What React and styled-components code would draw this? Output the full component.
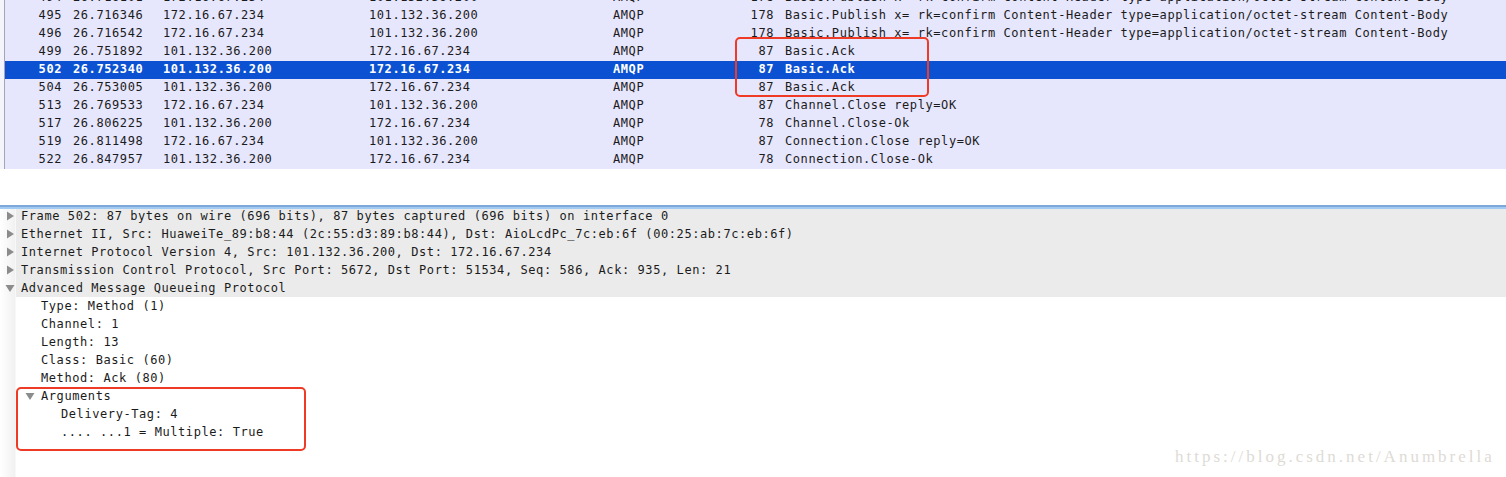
import styled, { createGlobalStyle } from "styled-components";

const GlobalStyle = createGlobalStyle`
  html, body {
    margin: 0;
    padding: 0;
    background: #ffffff;
    overflow: hidden;
  }
`;

const packets = [
  ["494", "26.716101", "172.16.67.234", "101.132.36.200", "AMQP", "178", "Basic.Publish x= rk=confirm Content-Header type=application/octet-stream Content-Body"],
  ["495", "26.716346", "172.16.67.234", "101.132.36.200", "AMQP", "178", "Basic.Publish x= rk=confirm Content-Header type=application/octet-stream Content-Body"],
  ["496", "26.716542", "172.16.67.234", "101.132.36.200", "AMQP", "178", "Basic.Publish x= rk=confirm Content-Header type=application/octet-stream Content-Body"],
  ["499", "26.751892", "101.132.36.200", "172.16.67.234", "AMQP", "87", "Basic.Ack"],
  ["502", "26.752340", "101.132.36.200", "172.16.67.234", "AMQP", "87", "Basic.Ack"],
  ["504", "26.753005", "101.132.36.200", "172.16.67.234", "AMQP", "87", "Basic.Ack"],
  ["513", "26.769533", "172.16.67.234", "101.132.36.200", "AMQP", "87", "Channel.Close reply=OK"],
  ["517", "26.806225", "101.132.36.200", "172.16.67.234", "AMQP", "78", "Channel.Close-Ok"],
  ["519", "26.811498", "172.16.67.234", "101.132.36.200", "AMQP", "87", "Connection.Close reply=OK"],
  ["522", "26.847957", "101.132.36.200", "172.16.67.234", "AMQP", "78", "Connection.Close-Ok"],
];

const details = [
  { level: 0, state: "closed", text: "Frame 502: 87 bytes on wire (696 bits), 87 bytes captured (696 bits) on interface 0" },
  { level: 0, state: "closed", text: "Ethernet II, Src: HuaweiTe_89:b8:44 (2c:55:d3:89:b8:44), Dst: AioLcdPc_7c:eb:6f (00:25:ab:7c:eb:6f)" },
  { level: 0, state: "closed", text: "Internet Protocol Version 4, Src: 101.132.36.200, Dst: 172.16.67.234" },
  { level: 0, state: "closed", text: "Transmission Control Protocol, Src Port: 5672, Dst Port: 51534, Seq: 586, Ack: 935, Len: 21" },
  { level: 0, state: "open", text: "Advanced Message Queueing Protocol" },
  { level: 1, text: "Type: Method (1)" },
  { level: 1, text: "Channel: 1" },
  { level: 1, text: "Length: 13" },
  { level: 1, text: "Class: Basic (60)" },
  { level: 1, text: "Method: Ack (80)" },
  { level: 1, state: "open", text: "Arguments" },
  { level: 2, text: "Delivery-Tag: 4" },
  { level: 2, text: ".... ...1 = Multiple: True" },
];

const Arrow = ({ open }) =>
  open ? (
    <svg width="10" height="10" viewBox="0 0 10 10">
      <polygon points="0.5,2 9.5,2 5,9" fill="#8c8c8c" />
    </svg>
  ) : (
    <svg width="10" height="10" viewBox="0 0 10 10">
      <polygon points="2,0.5 9,5 2,9.5" fill="#8c8c8c" />
    </svg>
  );

const App = () => {
  return (
    <Page>
      <GlobalStyle />
      <PacketList>
        {packets.map((p, i) => (
          <PacketRow key={i} selected={p[0] === "502"}>
            <Cell align="right">{p[0]}</Cell>
            <Cell pad>{p[1]}</Cell>
            <Cell>{p[2]}</Cell>
            <Cell>{p[3]}</Cell>
            <Cell>{p[4]}</Cell>
            <Cell align="right">{p[5]}</Cell>
            <Cell pad>{p[6]}</Cell>
          </PacketRow>
        ))}
      </PacketList>
      <Gap />
      <Splitter />
      <Tree>
        {details.map((d, i) => (
          <TreeRow key={i} level={d.level} top={d.level === 0}>
            <Toggle>{d.state && <Arrow open={d.state === "open"} />}</Toggle>
            <span>{d.text}</span>
          </TreeRow>
        ))}
      </Tree>
      <Mark style={{ left: 735, top: 37, width: 190, height: 56 }} />
      <Mark style={{ left: 16, top: 387, width: 286, height: 60 }} />
      <Watermark>https://blog.csdn.net/Anumbrella</Watermark>
    </Page>
  );
};

const Page = styled.div`
  position: relative;
  width: 1506px;
  height: 477px;
  overflow: hidden;
  background: #ffffff;
  font-family: "DejaVu Sans Mono", monospace;
  font-size: 12px;
  letter-spacing: 0.58px;
  color: #1b1b1b;
`;

const PacketList = styled.div`
  margin-top: -11px;
  padding-left: 4px;
  background: #f4f4fd;
`;

const PacketRow = styled.div`
  display: grid;
  grid-template-columns: 57px 101px 206px 244px 87px 74px 1fr;
  height: 18px;
  line-height: 17px;
  border-left: 1px solid #a4a4b4;
  background: ${(p) => (p.selected ? "#0b51d1" : "#e6e6fd")};
  color: ${(p) => (p.selected ? "#ffffff" : "#1b1b1b")};
  font-weight: ${(p) => (p.selected ? "bold" : "normal")};
`;

const Cell = styled.div`
  white-space: nowrap;
  overflow: hidden;
  text-align: ${(p) => p.align || "left"};
  padding-left: ${(p) => (p.pad ? "11px" : "0")};
`;

const Gap = styled.div`
  height: 36px;
`;

const Splitter = styled.div`
  position: relative;
  z-index: 1;
  height: 4px;
  background: linear-gradient(#7ea7da 0 2px, #a2cbf3 2px 4px);
`;

const Tree = styled.div`
  margin-top: -2px;
  height: 300px;
  background: linear-gradient(to right, #ffffff 0, #f1f1f1 15px, #ffffff 16px);
`;

const TreeRow = styled.div`
  display: flex;
  align-items: center;
  height: 18px;
  line-height: 18px;
  padding-left: ${(p) => 5 + p.level * 20}px;
  white-space: nowrap;
  background: ${(p) =>
    p.top ? "linear-gradient(to right, transparent 16px, #ebebeb 16px)" : "transparent"};
`;

const Toggle = styled.span`
  display: inline-flex;
  align-items: center;
  width: 16px;
  height: 18px;
`;

const Mark = styled.div`
  position: absolute;
  border: 2px solid #ef3a25;
  border-radius: 5px;
`;

const Watermark = styled.div`
  position: absolute;
  left: 1175px;
  top: 447px;
  font-family: "Liberation Serif", serif;
  font-size: 17px;
  letter-spacing: 3px;
  color: #dedbd5;
`;

export default App;
